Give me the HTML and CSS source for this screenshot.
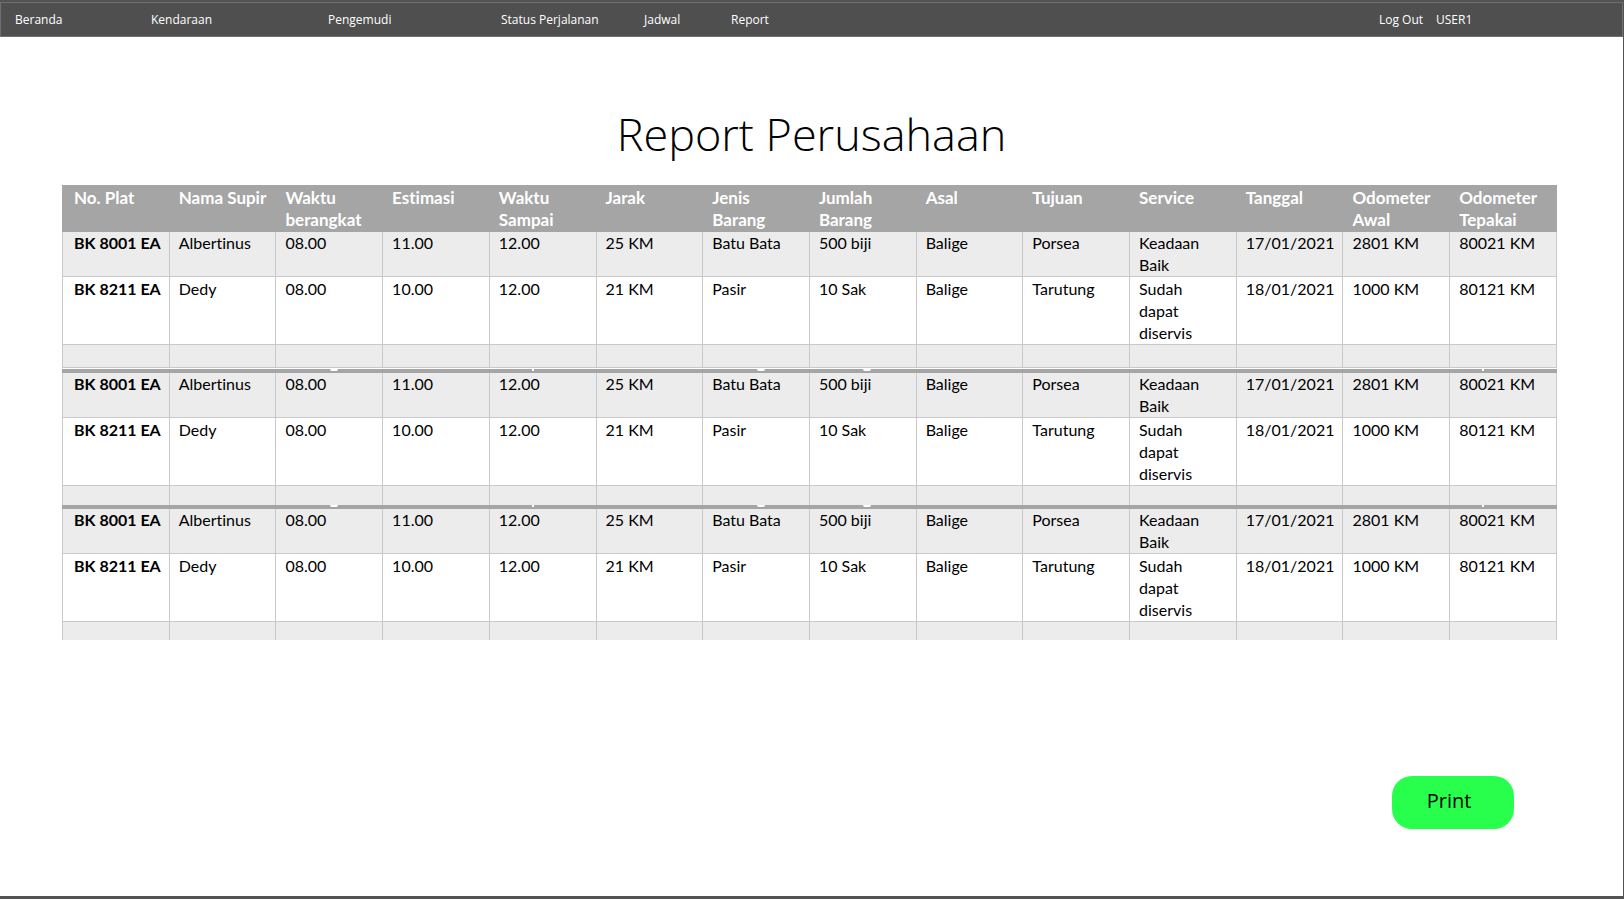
FILE: index.html
```html
<!DOCTYPE html>
<html lang="id">
<head>
<meta charset="utf-8">
<title>Report Perusahaan</title>
<link rel="stylesheet" href="styles.css">
</head>
<body>
<div class="page">
  <nav class="topbar">
    <a href="#">Beranda</a>
    <a href="#">Kendaraan</a>
    <a href="#">Pengemudi</a>
    <a href="#">Status Perjalanan</a>
    <a href="#">Jadwal</a>
    <a href="#">Report</a>
    <a href="#">Log Out</a>
    <a href="#">USER1</a>
  </nav>
  <main class="content">
    <h1 class="title">Report Perusahaan</h1>
    <table class="report first">
      <thead>
        <tr><th>No. Plat</th><th>Nama Supir</th><th>Waktu<br>berangkat</th><th>Estimasi</th><th>Waktu<br>Sampai</th><th>Jarak</th><th>Jenis<br>Barang</th><th>Jumlah<br>Barang</th><th>Asal</th><th>Tujuan</th><th>Service</th><th>Tanggal</th><th>Odometer<br>Awal</th><th>Odometer<br>Tepakai</th></tr>
      </thead>
      <tbody>
        <tr><th>BK 8001 EA</th><td>Albertinus</td><td>08.00</td><td>11.00</td><td>12.00</td><td>25 KM</td><td>Batu Bata</td><td>500 biji</td><td>Balige</td><td>Porsea</td><td>Keadaan<br>Baik</td><td>17/01/2021</td><td>2801 KM</td><td>80021 KM</td></tr>
        <tr><th>BK 8211 EA</th><td>Dedy</td><td>08.00</td><td>10.00</td><td>12.00</td><td>21 KM</td><td>Pasir</td><td>10 Sak</td><td>Balige</td><td>Tarutung</td><td>Sudah<br>dapat<br>diservis</td><td>18/01/2021</td><td>1000 KM</td><td>80121 KM</td></tr>
        <tr class="blank"><td></td><td></td><td></td><td></td><td></td><td></td><td></td><td></td><td></td><td></td><td></td><td></td><td></td><td></td></tr>
      </tbody>
    </table>
    <div class="bar"><i></i><i></i><i class="hook"></i><i></i><i class="stem"></i><i></i><i class="hook"></i><i class="hook"></i><i></i><i></i><i></i><i></i><i></i><i class="stem"></i></div>
    <table class="report continued">
      <tbody>
        <tr><th>BK 8001 EA</th><td>Albertinus</td><td>08.00</td><td>11.00</td><td>12.00</td><td>25 KM</td><td>Batu Bata</td><td>500 biji</td><td>Balige</td><td>Porsea</td><td>Keadaan<br>Baik</td><td>17/01/2021</td><td>2801 KM</td><td>80021 KM</td></tr>
        <tr><th>BK 8211 EA</th><td>Dedy</td><td>08.00</td><td>10.00</td><td>12.00</td><td>21 KM</td><td>Pasir</td><td>10 Sak</td><td>Balige</td><td>Tarutung</td><td>Sudah<br>dapat<br>diservis</td><td>18/01/2021</td><td>1000 KM</td><td>80121 KM</td></tr>
        <tr class="blank"><td></td><td></td><td></td><td></td><td></td><td></td><td></td><td></td><td></td><td></td><td></td><td></td><td></td><td></td></tr>
      </tbody>
    </table>
    <div class="bar"><i></i><i></i><i class="hook"></i><i></i><i class="stem"></i><i></i><i class="hook"></i><i class="hook"></i><i></i><i></i><i></i><i></i><i></i><i class="stem"></i></div>
    <table class="report continued">
      <tbody>
        <tr><th>BK 8001 EA</th><td>Albertinus</td><td>08.00</td><td>11.00</td><td>12.00</td><td>25 KM</td><td>Batu Bata</td><td>500 biji</td><td>Balige</td><td>Porsea</td><td>Keadaan<br>Baik</td><td>17/01/2021</td><td>2801 KM</td><td>80021 KM</td></tr>
        <tr><th>BK 8211 EA</th><td>Dedy</td><td>08.00</td><td>10.00</td><td>12.00</td><td>21 KM</td><td>Pasir</td><td>10 Sak</td><td>Balige</td><td>Tarutung</td><td>Sudah<br>dapat<br>diservis</td><td>18/01/2021</td><td>1000 KM</td><td>80121 KM</td></tr>
        <tr class="blank"><td></td><td></td><td></td><td></td><td></td><td></td><td></td><td></td><td></td><td></td><td></td><td></td><td></td><td></td></tr>
      </tbody>
    </table>
    <div class="actions"><button class="print" type="button">Print</button></div>
  </main>
</div>
</body>
</html>
```
FILE: styles.css
```css
* { box-sizing: border-box; }
body {
  margin: 0;
  background: #fff;
  color: #000;
  font-family: "Open Sans", "Noto Sans", sans-serif;
}
.page {
  display: flex;
  flex-direction: column;
  min-height: 100vh;
  border: solid #535353;
  border-width: 2px 1px 3px 0;
}
.topbar {
  display: grid;
  grid-template-columns: 136fr 177fr 173fr 143fr 87fr 648fr 57fr 186fr;
  align-items: center;
  height: 35px;
  padding-left: 14px;
  border: 1px solid #6f6f6f;
  background: #4f4f4f;
}
.topbar a {
  color: #fff;
  font-size: 12px;
  line-height: 16px;
  text-decoration: none;
  white-space: nowrap;
}
.content { padding: 64px 66px 0 62px; }
.title {
  margin: 0 0 18px;
  padding-left: 4px;
  font-size: 45px;
  font-weight: 300;
  line-height: 66px;
  text-align: center;
}
.report {
  width: 100%;
  table-layout: fixed;
  border-collapse: collapse;
  font-family: Lato, sans-serif;
  font-size: 16px;
  font-variant-ligatures: none;
  line-height: 22px;
}
.report th,
.report td {
  padding: 0 0 0 9px;
  border: 1px solid #c9c9c9;
  text-align: left;
  vertical-align: top;
  white-space: nowrap;
}
.report th:first-child { padding-left: 11px; }
.report thead th {
  padding-top: 1px;
  border-color: #a5a5a5;
  background: #a5a5a5;
  color: #fff;
  font-size: 17px;
}
.report tbody tr:nth-child(odd) { background: #ececec; }
.report tbody tr:nth-child(2) > * { padding-top: 1px; }
.report .blank td { height: 23px; }
.first { margin-bottom: 1px; }
.continued tr:first-child > * { border-top: 0; }
.report.continued .blank td { height: 19px; border-bottom: 0; }
.bar {
  display: grid;
  grid-template-columns: repeat(14, 1fr);
  height: 4px;
  background: #a5a5a5;
}
.hook::before,
.stem::before {
  content: "";
  display: block;
  height: 2px;
  background: #fff;
}
.hook::before {
  width: 8px;
  margin-left: 54px;
  border-radius: 0 0 4px 4px;
}
.stem::before {
  width: 2px;
  margin-left: 50%;
}
.stem:last-child::before { margin-left: 30%; }
.stem:not(:last-child)::before { margin-left: 40%; }
.actions {
  display: flex;
  justify-content: flex-end;
  padding: 136px 43px 0 0;
}
.print {
  width: 122px;
  height: 53px;
  padding: 0 8px 4px 0;
  border: 0;
  border-radius: 20px;
  background: #28ff4c;
  color: #000;
  font-family: inherit;
  font-size: 20px;
}
```
